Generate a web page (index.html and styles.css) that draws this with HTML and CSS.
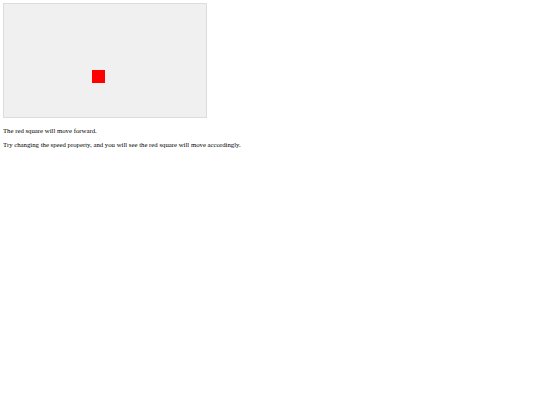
FILE: index.html
```html
<!DOCTYPE html>
<html>
<head>
<meta charset="utf-8">
<link rel="stylesheet" href="styles.css">
</head>
<body>
<div class="stage">
  <div class="square"></div>
</div>
<p class="note first">The red square will move forward.</p>
<p class="note">Try changing the speed property, and you will see the red square will move accordingly.</p>
</body>
</html>
```
FILE: styles.css
```css
body {
  margin: 3px;
  font-family: "Liberation Serif", "Times New Roman", serif;
  font-size: 6.75px;
  color: #000;
  background: #fff;
}
.stage {
  width: 202px;
  height: 113px;
  background: #f0f0f0;
  border: 1px solid #dcdcdc;
  position: relative;
}
.square {
  position: absolute;
  left: 88px;
  top: 66px;
  width: 13px;
  height: 13px;
  background: #ff0000;
}
.note {
  margin: 6.75px 0;
}
.note.first {
  margin-top: 9px;
}
```
